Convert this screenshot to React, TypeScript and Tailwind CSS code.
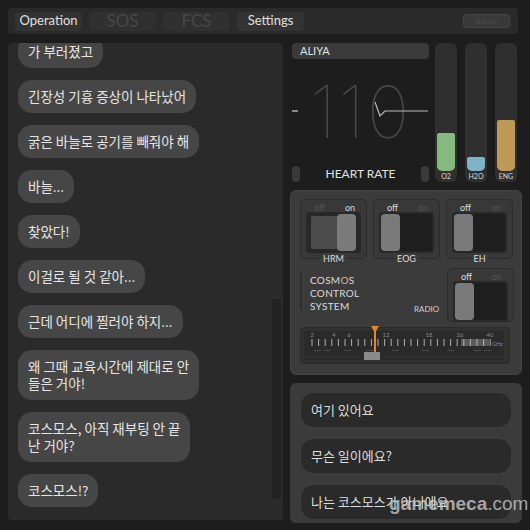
import React from "react";

const KR = "font-['Noto_Sans_CJK_KR','Noto_Sans',sans-serif]";
const LAT = "font-['Lato','Noto_Sans',sans-serif]";

const msgs: string[][] = [
  ["가 부러졌고"],
  ["긴장성 기흉 증상이 나타났어"],
  ["굵은 바늘로 공기를 빼줘야 해"],
  ["바늘..."],
  ["찾았다!"],
  ["이걸로 될 것 같아..."],
  ["근데 어디에 찔러야 하지..."],
  ["왜 그때 교육시간에 제대로 안", "들은 거야!"],
  ["코스모스, 아직 재부팅 안 끝", "난 거야?"],
  ["코스모스!?"],
];

function Toggle({ on }: { on: boolean }) {
  return (
    <div className="mx-auto w-[55px] h-[41px] rounded-[4px] bg-[#282828] flex items-center p-[2px]">
      {on ? (
        <>
          <div className="ml-[3px] w-[26px] h-[33px] bg-[#4b4b4b] rounded-l-[2px]" />
          <div className="w-[19px] h-[37px] bg-[#7a7a7a] rounded-[4px]" />
        </>
      ) : (
        <>
          <div className="w-[19px] h-[37px] bg-[#7a7a7a] rounded-[4px]" />
          <div className="flex-1 h-[37px] bg-[#1e1e1e] rounded-r-[2px]" />
        </>
      )}
    </div>
  );
}

function SwitchBox({ on, label, h = 60 }: { on: boolean; label?: string; h?: number }) {
  return (
    <div
      className={`relative w-[67px] rounded-[5px] border border-[#2b2b2b] bg-[#383838] ${h === 60 ? "h-[60px]" : "h-[54px]"} ${LAT}`}
    >
      <div className="flex h-[12px] items-center text-[9px] leading-none">
        <span className={`absolute left-[13px] top-[3px] ${on ? "text-[#555]" : "text-[#dcdcdc]"}`}>off</span>
        <span className={`absolute left-[44px] top-[3px] ${on ? "text-[#dcdcdc]" : "text-[#555]"}`}>on</span>
      </div>
      <Toggle on={on} />
      {label && (
        <div className="absolute bottom-[-6px] left-1/2 -translate-x-1/2 bg-[#3b3b3b] px-[3px] text-[9px] leading-[11px] text-[#dcdcdc]">
          {label}
        </div>
      )}
    </div>
  );
}

function Dial() {
  const ticks: number[] = [];
  for (let i = 0; i < 28; i++) ticks.push(8 + i * 6.6);
  const nums: [string, number][] = [
    ["2", 8],
    ["4", 30],
    ["6", 45],
    ["12", 82],
    ["18", 125],
    ["26", 156],
    ["40", 186],
  ];
  return (
    <svg width="200" height="29" viewBox="0 0 200 29" className="block">
      <rect x="0" y="0" width="200" height="29" rx="2" fill="#2a2a2a" />
      <rect x="157" y="8" width="28" height="7" fill="#5a5a5a" />
      {ticks.map((x, i) => (
        <line key={i} x1={x} y1="8" x2={x} y2="15" stroke="#bdbdbd" strokeWidth="0.9" />
      ))}
      {nums.map(([t, x]) => (
        <text key={t} x={x} y="6" fontSize="6" fill="#8a8a8a" textAnchor="middle" fontFamily="Lato, sans-serif">
          {t}
        </text>
      ))}
      <text x="188" y="15" fontSize="5.5" fill="#8a8a8a" fontFamily="Lato, sans-serif">GHz</text>
      {[10, 20, 40, 62, 88, 118, 143, 170, 180].map((x, i) => (
        <rect key={i} x={x} y="19" width="7" height="1" fill="#4a4a4a" />
      ))}
      <line x1="0" y1="26" x2="200" y2="26" stroke="#333" strokeWidth="1" />
    </svg>
  );
}

export default function App() {
  return (
    <div className={`relative w-[530px] h-[530px] overflow-hidden bg-[#1d1d1d] pt-[8px] pl-[8px] ${LAT}`}>
      {/* top bar */}
      <div className="w-[510px] h-[26px] rounded-[4px] bg-[#2a2a2a] flex items-center pl-[7px] gap-[7px]">
        <div className="w-[67px] h-[19px] rounded-[4px] bg-[#333333] flex items-center justify-center text-[13px] text-[#e0e0e0]">
          Operation
        </div>
        <div className="w-[67px] h-[19px] rounded-[4px] bg-[#303030] flex items-center justify-center text-[17px] text-[#474747]">
          SOS
        </div>
        <div className="w-[67px] h-[19px] rounded-[4px] bg-[#303030] flex items-center justify-center text-[17px] text-[#474747]">
          FCS
        </div>
        <div className="w-[67px] h-[19px] rounded-[4px] bg-[#333333] flex items-center justify-center text-[13px] text-[#e0e0e0]">
          Settings
        </div>
        <div className="ml-auto mr-[8px] w-[47px] h-[14px] rounded-[3px] bg-[#393939] border border-[#444] flex items-center justify-center text-[8px] text-[#4a4a4a]">
          Admin
        </div>
      </div>

      <div className="mt-[9px] flex gap-[7px]">
        {/* chat panel */}
        <div className={`relative w-[275px] h-[477px] overflow-hidden rounded-[4px] bg-[#2a2a2a] pl-[10px] ${KR}`}>
          <div className="mt-[-8px] flex flex-col items-start gap-[12px]">
            {msgs.map((m, i) => (
              <div
                key={i}
                className="rounded-[14px] bg-[#464646] px-[10px] py-[8px] text-[13.5px] leading-[17px] text-[#e6e6e6]"
              >
                {m.map((l, j) => (
                  <div key={j}>{l}</div>
                ))}
              </div>
            ))}
          </div>
          <div className="absolute right-[2px] top-[256px] w-[9px] h-[200px] rounded-[3px] bg-[#222222]" />
        </div>

        {/* right column */}
        <div className="w-[232px]">
          <div className="flex h-[139px] pl-[2px]">
            <div className="w-[137px] flex flex-col">
              <div className="h-[16px] rounded-[4px] bg-[#3a3a3a] pl-[8px] text-[11px] leading-[16px] text-[#e0e0e0]">
                ALIYA
              </div>
              <div className="relative flex-1 flex items-center justify-center">
                <span className="mt-[-2px] font-['Inter',sans-serif] font-thin text-[72px] leading-none text-[#474747] tracking-[2px]">
                  110
                </span>
                <svg className="absolute left-0 top-0" width="137" height="107" viewBox="0 0 137 107">
                  <line x1="0" y1="52" x2="6" y2="52" stroke="#bbbbbb" strokeWidth="1.4" />
                  <path d="M83 43 L88 57 L93 52 L136 52" fill="none" stroke="#bbbbbb" strokeWidth="1.2" />
                </svg>
              </div>
              <div className="h-[16px] flex items-center justify-between">
                <div className="w-[8px] h-[16px] rounded-full bg-[#3a3a3a]" />
                <div className="text-[12px] text-[#e0e0e0] leading-none">HEART RATE</div>
                <div className="w-[8px] h-[16px] rounded-full bg-[#3a3a3a]" />
              </div>
            </div>
            <div className="ml-[6px] flex gap-[8px]">
              {[
                { l: "O2", h: "h-[38px]", c: "bg-[#86b97f]" },
                { l: "H2O", h: "h-[14px]", c: "bg-[#7fb3c9]" },
                { l: "ENG", h: "h-[51px]", c: "bg-[#bf9a56]" },
              ].map((b) => (
                <div key={b.l} className="w-[22px] h-[139px] rounded-[6px] bg-[#2f2f2f] flex flex-col justify-end px-[2px]">
                  <div className={`${b.h} ${b.c} rounded-t-[2px] rounded-b-[5px]`} />
                  <div className="h-[11px] text-[7px] leading-[11px] text-center text-[#dcdcdc]">{b.l}</div>
                </div>
              ))}
            </div>
          </div>

          {/* control panel */}
          <div className="mt-[8px] h-[185px] rounded-[6px] bg-[#3b3b3b] border border-[#444] pl-[9px] pt-[8px]">
            <div className="flex gap-[6px]">
              <SwitchBox on={true} label="HRM" />
              <SwitchBox on={false} label="EOG" />
              <SwitchBox on={false} label="EH" />
            </div>
            <div className="mt-[9px] flex">
              <div className="relative w-[141px] h-[54px]">
                <div className="absolute left-0 top-[4px] w-[2px] h-[38px] bg-[#2e2e2e]" />
                <div className="absolute left-[10px] top-[6px] text-[10px] leading-[13px] text-[#dcdcdc] tracking-[0.3px]">
                  <div>
                    COSM<span className="text-[#e0b58c]">O</span>S
                  </div>
                  <div>CONTROL</div>
                  <div>SYSTEM</div>
                </div>
                <div className="absolute left-[114px] top-[35px] text-[8px] text-[#cfcfcf]">RADIO</div>
              </div>
              <div className="ml-[6px]">
                <SwitchBox on={false} h={54} />
              </div>
            </div>
            <div className="relative mt-[5px] w-[210px] h-[37px] rounded-[4px] bg-[#313131] border border-[#2a2a2a] p-[3px]">
              <Dial />
              <div className="absolute left-[70px] top-[-2px] w-0 h-0 border-l-[4px] border-r-[4px] border-t-[7px] border-l-transparent border-r-transparent border-t-[#e2872a]" />
              <div className="absolute left-[73px] top-[2px] w-[2px] h-[22px] bg-[#e2872a]" />
              <div className="absolute left-[63px] top-[24px] w-[16px] h-[8px] bg-[#8a8a8a]" />
            </div>
          </div>

          {/* answers */}
          <div className={`mt-[8px] h-[140px] rounded-[6px] bg-[#3b3b3b] px-[11px] pt-[10px] flex flex-col gap-[12px] ${KR}`}>
            {["여기 있어요", "무슨 일이에요?", "나는 코스모스가 아니에요"].map((t) => (
              <div key={t} className="h-[34px] rounded-[13px] bg-[#2a2a2a] pl-[10px] flex items-center text-[13px] text-[#dedede]">
                {t}
              </div>
            ))}
          </div>
        </div>
      </div>

      <div className="absolute left-[389px] top-[494px] font-['Liberation_Sans',sans-serif] text-[19px] leading-none text-[#c8c8c8]/80">
        <span className="font-bold">gamemeca</span>
        <span>.com</span>
      </div>
    </div>
  );
}
